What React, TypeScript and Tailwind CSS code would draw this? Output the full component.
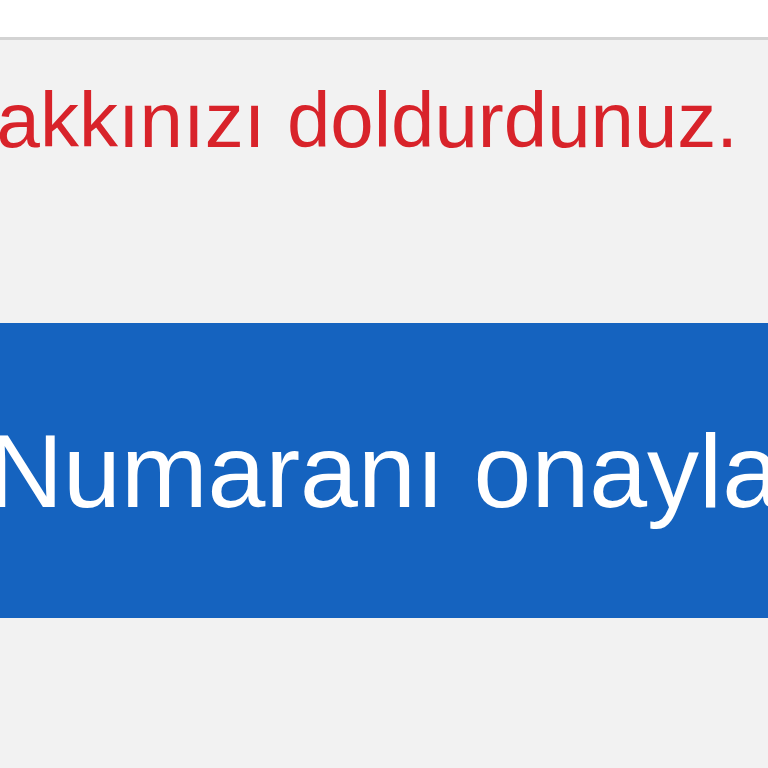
export default function App() {
  return (
    <div className="h-[768px] w-[768px] overflow-hidden bg-[#f2f2f2] font-['Liberation_Sans',Arial,sans-serif]">
      {/* Header */}
      <header className="h-[37px] bg-white border-b-[3px] border-[#d3d3d3] box-content" />

      {/* Error message */}
      <div className="flex justify-end whitespace-nowrap pr-[30px] pt-[35px]">
        <p className="text-[78px] leading-[90px] text-[#d8232a]">Deneme hakkınızı doldurdunuz.</p>
      </div>

      {/* Confirm button */}
      <div className="mt-[158px] flex h-[295px] items-center justify-center overflow-hidden bg-[#1563bf] whitespace-nowrap">
        <span className="text-[104px] leading-none text-white">Numaranı onayla</span>
      </div>
    </div>
  );
}
